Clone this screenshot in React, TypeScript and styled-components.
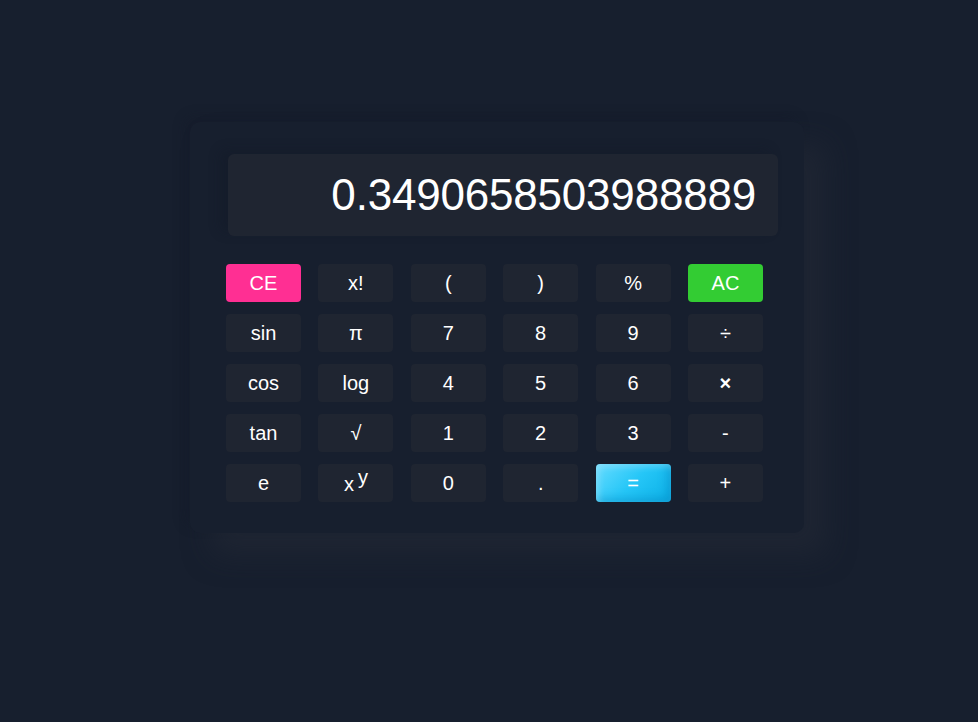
import styled, { createGlobalStyle } from "styled-components";

const GlobalStyle = createGlobalStyle`
  html, body {
    margin: 0;
    padding: 0;
    background: #171f2e;
  }
  body {
    font-family: "Liberation Sans", Arial, sans-serif;
    min-height: 722px;
  }
`;

const Page = styled.div`
  min-height: 722px;
  padding: 122px 0 0 190px;
  box-sizing: border-box;
`;

const Calculator = styled.div`
  width: 614px;
  height: 411px;
  box-sizing: border-box;
  padding: 32px 26px 0 36px;
  border-radius: 10px;
  background: #171f2e;
  box-shadow: 22px 22px 28px rgba(36, 42, 55, 0.55),
    -6px -6px 12px rgba(18, 25, 39, 0.25);
`;

const Display = styled.div`
  margin-left: 2px;
  height: 82px;
  border-radius: 6px;
  background: #1f2531;
  box-shadow: -8px -4px 12px rgba(18, 24, 38, 0.3);
  display: flex;
  align-items: center;
  justify-content: flex-end;
  padding-right: 22px;
  color: #ffffff;
  font-size: 44px;
  letter-spacing: -0.2px;
`;

const Keys = styled.div`
  margin-top: 28px;
  width: 537px;
  display: grid;
  grid-template-columns: repeat(6, 75px);
  grid-auto-rows: 38px;
  column-gap: 17.4px;
  row-gap: 12px;
`;

type Variant = "plain" | "clear" | "reset" | "equals";

const backgrounds: Record<Variant, string> = {
  plain: "#1f2531",
  clear: "#ff2f93",
  reset: "#33cc33",
  equals: "linear-gradient(135deg, #66dcff 0%, #25c6f7 50%, #0bb0e6 100%)",
};

const Key = styled.button<{ $variant: Variant; $bold?: boolean }>`
  border: none;
  border-radius: 4px;
  background: ${(p) => backgrounds[p.$variant]};
  box-shadow: ${(p) =>
    p.$variant === "equals"
      ? "inset 3px 3px 6px rgba(255,255,255,0.25), inset -4px -4px 8px rgba(0,120,180,0.35)"
      : "none"};
  color: #ffffff;
  font-family: "Liberation Sans", Arial, sans-serif;
  font-size: 20px;
  font-weight: ${(p) => (p.$bold ? 700 : 400)};
  display: flex;
  align-items: center;
  justify-content: center;
  padding: 0;
  cursor: pointer;
`;

const Base = styled.span`
  font-size: 20px;
  position: relative;
  top: 1px;
`;

const Sup = styled.span`
  font-size: 20px;
  position: relative;
  top: -6px;
  margin-left: 4px;
`;

const keys: { label: React.ReactNode; variant?: Variant; bold?: boolean }[] = [
  { label: "CE", variant: "clear" },
  { label: "x!" },
  { label: "(" },
  { label: ")" },
  { label: "%" },
  { label: "AC", variant: "reset" },
  { label: "sin" },
  { label: "π" },
  { label: "7" },
  { label: "8" },
  { label: "9" },
  { label: "÷" },
  { label: "cos" },
  { label: "log" },
  { label: "4" },
  { label: "5" },
  { label: "6" },
  { label: "×", bold: true },
  { label: "tan" },
  { label: "√" },
  { label: "1" },
  { label: "2" },
  { label: "3" },
  { label: "-" },
  { label: "e" },
  {
    label: (
      <>
        <Base>x</Base>
        <Sup>y</Sup>
      </>
    ),
  },
  { label: "0" },
  { label: "." },
  { label: "=", variant: "equals" },
  { label: "+" },
];

const App = () => {
  return (
    <Page>
      <GlobalStyle />
      <Calculator>
        <Display>0.3490658503988889</Display>
        <Keys>
          {keys.map((k, i) => (
            <Key key={i} $variant={k.variant ?? "plain"} $bold={k.bold}>
              {k.label}
            </Key>
          ))}
        </Keys>
      </Calculator>
    </Page>
  );
};

export default App;
